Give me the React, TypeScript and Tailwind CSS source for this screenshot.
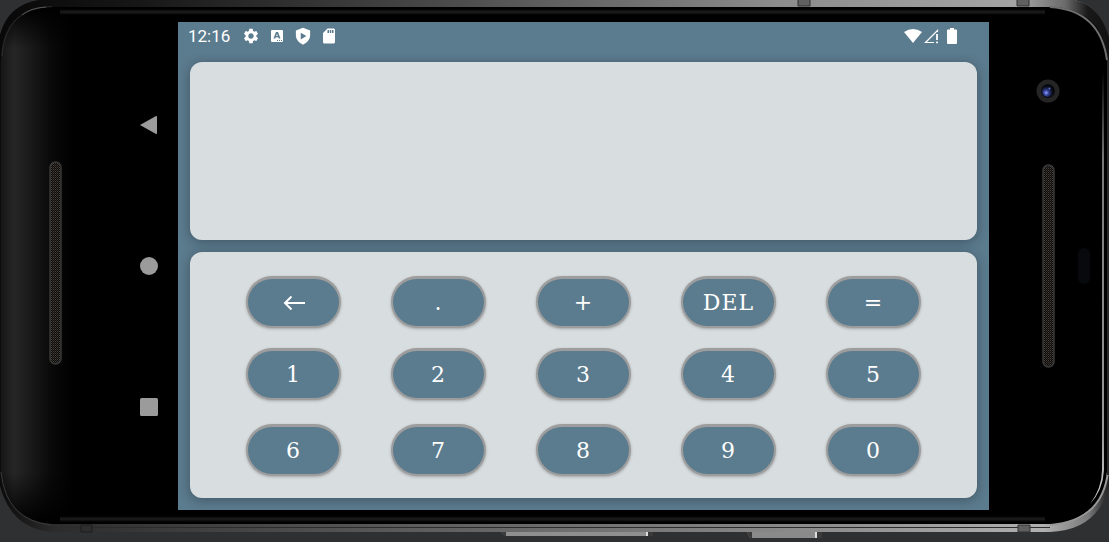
import type { ReactNode } from "react";

const keyRows = [
  { gap: "", keys: ["back", ".", "+", "DEL", "="] },
  { gap: "mt-5", keys: ["1", "2", "3", "4", "5"] },
  { gap: "mt-6", keys: ["6", "7", "8", "9", "0"] },
];

function Shell() {
  return (
    <svg
      aria-hidden="true"
      viewBox="0 0 1109 542"
      preserveAspectRatio="none"
      className="absolute inset-0 h-full w-full"
    >
      <defs>
        <linearGradient id="rim" x1="0" x2="1" y1="0" y2="0">
          <stop offset="0" stopColor="#0b0b0b" />
          <stop offset="0.05" stopColor="#2c2c2c" />
          <stop offset="0.4" stopColor="#606060" />
          <stop offset="0.75" stopColor="#8e8e8e" />
          <stop offset="0.94" stopColor="#b0b0b0" />
          <stop offset="0.98" stopColor="#7c7c7c" />
          <stop offset="1" stopColor="#1c1c1c" />
        </linearGradient>
        <linearGradient id="topRim" x1="0" x2="1" y1="0" y2="0">
          <stop offset="0" stopColor="#080808" />
          <stop offset="0.12" stopColor="#161616" />
          <stop offset="0.4" stopColor="#4a4a4a" />
          <stop offset="0.7" stopColor="#8c8c8c" />
          <stop offset="0.92" stopColor="#a4a4a4" />
          <stop offset="0.96" stopColor="#6a6a6a" />
          <stop offset="0.98" stopColor="#191919" />
          <stop offset="1" stopColor="#111" />
        </linearGradient>
        <linearGradient id="seam" x1="0" x2="1" y1="0" y2="0">
          <stop offset="0" stopColor="#222" />
          <stop offset="0.1" stopColor="#4a4a4a" />
          <stop offset="0.6" stopColor="#555" />
          <stop offset="1" stopColor="#666" />
        </linearGradient>
        <linearGradient id="glass" x1="0" x2="1" y1="0" y2="0">
          <stop offset="0" stopColor="#161616" />
          <stop offset="0.012" stopColor="#262626" />
          <stop offset="0.025" stopColor="#1b1b1b" />
          <stop offset="0.045" stopColor="#090909" />
          <stop offset="0.065" stopColor="#000" />
        </linearGradient>
        <linearGradient id="edge" x1="0" x2="0" y1="0" y2="1">
          <stop offset="0" stopColor="#000" />
          <stop offset="0.5" stopColor="#1d1d1d" />
          <stop offset="1" stopColor="#000" />
        </linearGradient>
        <linearGradient id="shade" x1="0" x2="0" y1="0" y2="1">
          <stop offset="0" stopColor="#000" />
          <stop offset="0.08" stopColor="#000" stopOpacity="0" />
          <stop offset="0.9" stopColor="#000" stopOpacity="0" />
          <stop offset="1" stopColor="#000" />
        </linearGradient>
        <linearGradient id="glint" x1="0" x2="0" y1="0" y2="1">
          <stop offset="0" stopColor="#000" />
          <stop offset="0.2" stopColor="#777" />
          <stop offset="0.85" stopColor="#999" />
          <stop offset="1" stopColor="#d5dad8" />
        </linearGradient>
      </defs>
      <path d="M-1 40Q6 1 48 -1H1070Q1102 4 1110 42V482Q1100 530 1050 532H54Q10 530-1 482Z" fill="url(#rim)" />
      <path d="M-1 40Q6 1 48 -1H1070Q1102 4 1110 42V60H0Z" fill="url(#topRim)" />
      <path d="M52 5.500H1050" stroke="url(#seam)" strokeWidth="2" />
      <path d="M1 56Q4 7 52 7H1056Q1104 12 1107 60V468Q1104 522 1054 524H52Q6 520 1 472Z" fill="url(#glass)" />
      <path d="M1 56Q4 7 52 7H90V524H52Q6 520 1 472Z" fill="url(#shade)" />
      <path d="M52 525.500H1050" stroke="url(#seam)" strokeWidth="3" />
      <path d="M52 527.500H1050" stroke="#2b2b2b" strokeWidth="1" />
      <rect x="60" y="9" width="985" height="6" fill="url(#edge)" />
      <rect x="60" y="516" width="985" height="6" fill="url(#edge)" />
      <path d="M2 56Q5 8 52 6.500" fill="none" stroke="#2c2c2c" />
      <path d="M22 15Q30 8 46 7" fill="none" stroke="#555" />
      <path d="M1 472Q6 521 52 525" fill="none" stroke="#3a3a3a" />
      <path d="M1050 7Q1100 10 1107 60" fill="none" stroke="#6e6e6e" strokeWidth="2" />
      <path d="M1050 525Q1102 521 1108 472" fill="none" stroke="#999" strokeWidth="2" />
      <path d="M1108 60V475" stroke="#2a2a2a" strokeWidth="2" />
      <path d="M1102 72H1104V470Q1103 490 1090 504Q1102 488 1102 470Z" fill="url(#glint)" />
      <path d="M798 -1H810V6H798ZM1017 -1H1029V6H1017ZM1018 525H1030V532H1018Z" fill="#606060" stroke="#333" />
      <path d="M81 525H92V532H81Z" fill="#2e2e2e" stroke="#1d1d1d" />
      <path d="M501 532H653L651 536H505Z" fill="#8f8f8f" />
      <path d="M747 532H822L820 538H750Z" fill="#8a8a8a" />
      <path d="M501 532H506V536H504ZM648 532H653V536H648ZM747 532H752V538H750ZM817 532H822V538H817Z" fill="#3b3b3b" />
      <path d="M646 532H648V536H646ZM815 532H817V538H815Z" fill="#dcdcdc" />
    </svg>
  );
}

function Speaker() {
  return (
    <svg aria-hidden="true" width="13" height="204" viewBox="0 0 13 204">
      <defs>
        <pattern id="mesh" width="2" height="2" patternUnits="userSpaceOnUse">
          <rect width="2" height="2" fill="#0d0c0a" />
          <rect width="1" height="1" fill="#45413a" />
          <rect x="1" y="1" width="1" height="1" fill="#2d2a26" />
        </pattern>
      </defs>
      <rect x="1" y="1" width="11" height="202" rx="5.500" fill="url(#mesh)" stroke="#393939" strokeWidth="1.500" />
    </svg>
  );
}

function Camera() {
  return (
    <svg aria-hidden="true" width="24" height="24" viewBox="0 0 24 24">
      <defs>
        <radialGradient id="lens" cx="0.35" cy="0.65" r="0.6">
          <stop offset="0" stopColor="#9aa9f5" />
          <stop offset="0.3" stopColor="#3d4ba8" />
          <stop offset="0.7" stopColor="#111737" />
          <stop offset="1" stopColor="#07080d" />
        </radialGradient>
      </defs>
      <circle cx="12" cy="12" r="11.500" fill="#252525" />
      <circle cx="12" cy="12" r="7" fill="#0b0c10" />
      <circle cx="12" cy="12" r="6" fill="url(#lens)" />
      <circle cx="13.500" cy="9.500" r="1" fill="#6478d8" />
    </svg>
  );
}

function NavButton({ label, children }: { label: string; children: ReactNode }) {
  return (
    <button type="button" aria-label={label} className="size-5">
      <svg viewBox="0 0 20 20" className="size-5" fill="#9b9b9b">
        {children}
      </svg>
    </button>
  );
}

function StatusBar() {
  return (
    <header className="flex h-7 items-center justify-between pr-8 pl-[10px] text-white">
      <div className="flex items-center gap-3">
        <time className="font-['Roboto',sans-serif] text-[17px] leading-5">12:16</time>
        <div className="flex items-center gap-2">
          <svg viewBox="0 0 24 24" className="size-[18px]" fill="currentColor">
            <path d="M19.140 12.940c.04-.3.060-.610.060-.940 0-.320-.020-.640-.070-.940l2.030-1.580a.49.49 0 0 0 .120-.610l-1.920-3.320a.488.488 0 0 0-.590-.220l-2.390.960c-.5-.380-1.030-.7-1.620-.940l-.360-2.540a.484.484 0 0 0-.480-.410h-3.840c-.240 0-.430.170-.470.410l-.360 2.540c-.590.240-1.130.570-1.620.940l-2.390-.960c-.220-.080-.470 0-.590.220L2.740 8.870c-.120.210-.080.470.120.610l2.030 1.580c-.050.3-.090.630-.090.940s.020.640.070.940l-2.030 1.580a.49.49 0 0 0-.120.610l1.920 3.320c.120.220.370.290.590.220l2.390-.960c.5.380 1.030.7 1.620.940l.360 2.540c.050.240.240.410.480.410h3.840c.240 0 .440-.170.470-.410l.360-2.540c.590-.240 1.130-.560 1.620-.940l2.390.960c.220.080.470 0 .590-.220l1.920-3.320c.120-.220.070-.470-.120-.610zM12 15.600A3.610 3.610 0 0 1 8.400 12c0-1.980 1.620-3.600 3.600-3.600s3.600 1.620 3.600 3.600-1.620 3.600-3.600 3.600z" />
          </svg>
          <svg viewBox="-3 -2 18 18" className="size-[18px]" fill="currentColor">
            <path fillRule="evenodd" d="M1 1H11Q12 1 12 2V12Q12 13 11 13H1Q0 13 0 12V2Q0 1 1 1ZM5 3L2.500 9.500H4.300L4.800 8.200H7.200L7.700 9.500H9.500L7 3ZM6 4.800L6.800 7H5.200ZM6 11V12H7V11ZM8 11V12H9V11ZM10 11V12H11V11Z" />
          </svg>
          <svg viewBox="0 0 24 24" className="size-[18px]" fill="currentColor">
            <path fillRule="evenodd" d="M12 1 2.500 4.500V11C2.500 16.500 6.500 21 12 23.500C17.500 21 21.500 16.500 21.500 11V4.500ZM9 7.500L16.500 12L9 16.500Z" />
          </svg>
          <svg viewBox="0 0 24 24" className="size-[18px]" fill="currentColor">
            <path d="M18 2h-8L4 8v12c0 1.100.9 2 2 2h12c1.100 0 2-.9 2-2V4c0-1.100-.9-2-2-2zm-6 6h-2V4h2v4zm3 0h-2V4h2v4zm3 0h-2V4h2v4z" />
          </svg>
        </div>
      </div>
      <div className="flex items-center">
        <svg viewBox="0 0 18 16" className="h-4 w-[18px]" fill="currentColor">
          <path d="M9 15L0 4Q9-2 18 4Z" />
        </svg>
        <svg viewBox="0 0 16 16" className="ml-px size-4">
          <path d="M11 14.500H2.500L14.500 2.500V4" fill="none" stroke="currentColor" strokeWidth="1.200" />
          <path d="M14 6V12M14 13.500V15.300" stroke="currentColor" strokeWidth="1.800" />
        </svg>
        <svg viewBox="0 0 10 16" className="ml-2 h-4 w-[10px]" fill="currentColor">
          <path d="M3 0H7V1.500H9Q10 1.500 10 2.500V15Q10 16 9 16H1Q0 16 0 15V2.500Q0 1.500 1 1.500H3Z" />
        </svg>
      </div>
    </header>
  );
}

function Key({ value }: { value: string }) {
  return (
    <button
      type="button"
      aria-label={value === "back" ? "Backspace" : undefined}
      className="flex h-[52px] w-[95px] items-center justify-center rounded-full border-2 border-t-[3px] border-[#9d9d9d] bg-[#5b7b8e] font-['DejaVu_Serif',serif] text-[22px] leading-7 tracking-wider text-white shadow-[0_1px_3px_rgba(0,0,0,0.25)]"
    >
      {value === "back" ? (
        <svg viewBox="0 0 22 16" className="h-4 w-[22px]" fill="none" stroke="currentColor" strokeWidth="2">
          <path d="M22 8H2M8.500 1.500L2 8L8.500 14.500" />
        </svg>
      ) : (
        value
      )}
    </button>
  );
}

export default function App() {
  return (
    <div className="relative flex min-h-screen bg-[#2f3032]">
      <Shell />
      <div className="relative flex min-w-0 flex-1 pt-[22px] pb-8">
        <aside className="flex w-[178px] shrink-0 items-center justify-between pr-[19px] pl-[49px]">
          <div className="pb-[6px]">
            <Speaker />
          </div>
          <nav className="flex flex-col gap-[121px]">
            <NavButton label="Back">
              <path d="M1 10L17 1Q18 0.500 18 2V18Q18 19.500 17 19Z" />
            </NavButton>
            <NavButton label="Home">
              <circle cx="10" cy="10" r="9" />
            </NavButton>
            <NavButton label="Recent apps">
              <rect x="1" y="1" width="18" height="18" rx="1.500" />
            </NavButton>
          </nav>
        </aside>

        <div className="flex min-w-0 flex-1 flex-col bg-[#5b7b8e]">
          <StatusBar />
          <main className="flex flex-1 flex-col gap-3 p-3">
            <output
              aria-label="Result"
              className="min-h-24 flex-1 rounded-xl bg-[#d8dddf] shadow-[0_2px_12px_rgba(0,0,0,0.3)]"
            />
            <section
              aria-label="Keypad"
              className="rounded-xl bg-[#d8dddf] px-[31px] pt-6 pb-[22px] shadow-[0_2px_12px_rgba(0,0,0,0.3)]"
            >
              {keyRows.map((row) => (
                <div key={row.keys[0]} className={row.gap}>
                  <div className="grid grid-cols-5 justify-items-center">
                    {row.keys.map((value) => (
                      <Key key={value} value={value} />
                    ))}
                  </div>
                </div>
              ))}
            </section>
          </main>
        </div>

        <aside className="flex w-[120px] shrink-0 justify-between pr-[19px] pl-[47px]">
          <div className="flex flex-col items-center gap-[61px] pt-[57px]">
            <Camera />
            <Speaker />
          </div>
          <div className="h-9 w-3 self-center rounded-full bg-[#08090d]" />
        </aside>
      </div>
    </div>
  );
}
